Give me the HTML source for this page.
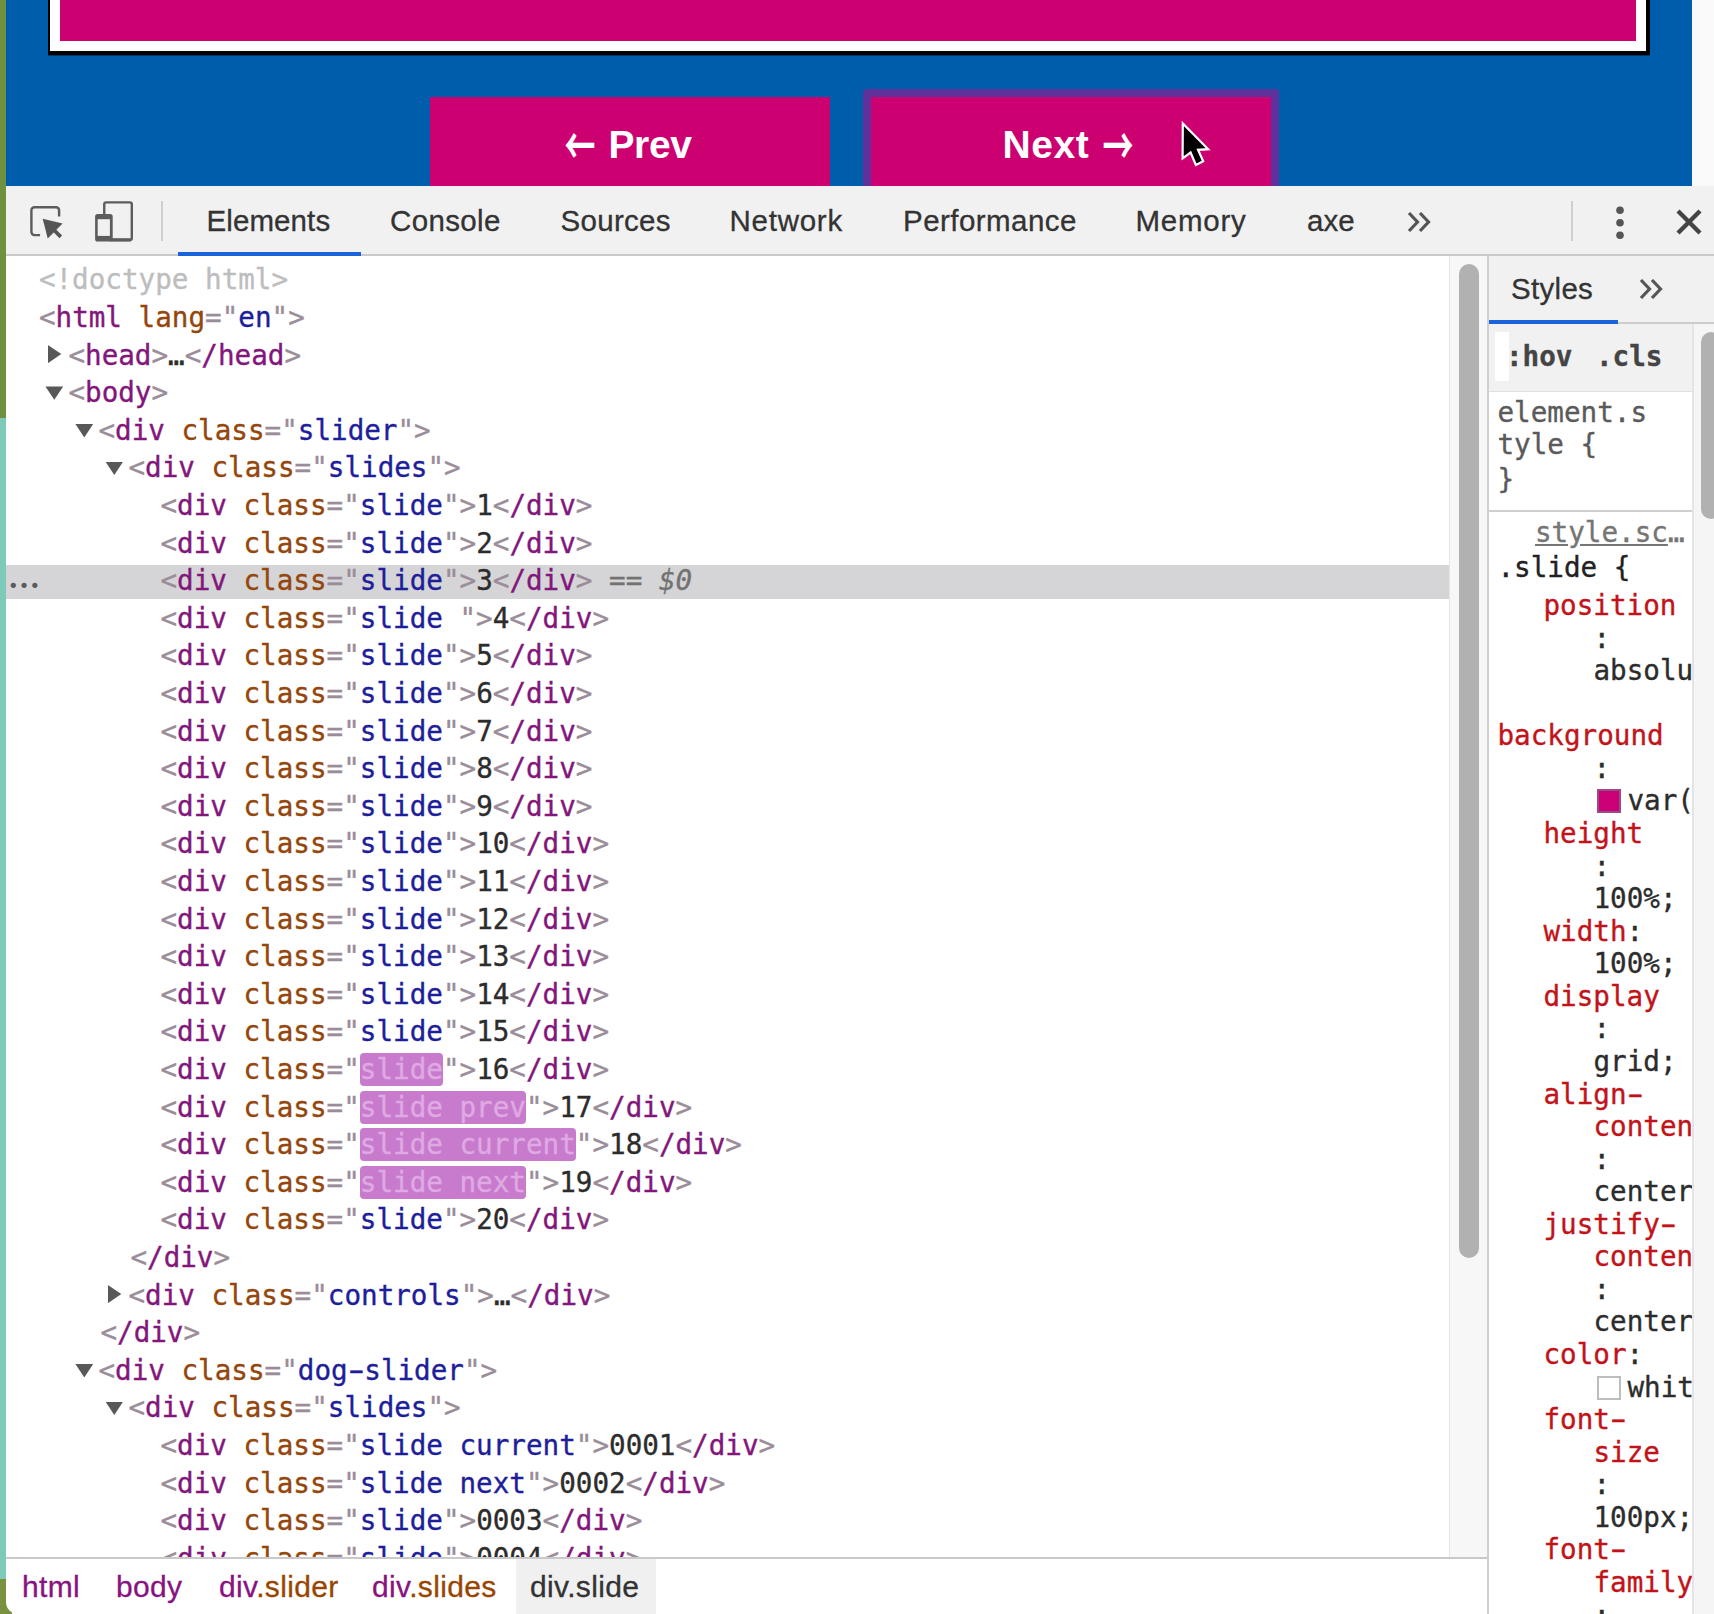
<!DOCTYPE html>
<html lang="en">
<head>
<meta charset="utf-8">
<title>Slider – DevTools</title>
<style>
*{box-sizing:border-box;margin:0;padding:0}
html,body{width:1714px;height:1614px;overflow:hidden;background:#fff}
body{position:relative;font-family:"Liberation Sans",sans-serif}
.abs{position:absolute}
/* left desktop strip */
#strip1{left:0;top:0;width:5.5px;height:418px;background:#6f903e}
#strip2{left:0;top:418px;width:5.5px;height:1162px;background:#7ecab9}
#strip3{left:0;top:1579px;width:12px;height:35px;background:#7a9140}
/* page */
#page{left:6px;top:0;width:1686px;height:186px;background:#005dac;overflow:hidden}
#pagescroll{left:1692px;top:0;width:22px;height:186px;background:#fafafa}
#slide{left:44px;top:-60px;width:1596px;height:111px;background:#cc0070;border:10px solid #fff;box-shadow:1px 1.4px 0 3px #000}
.btn{top:97px;height:120px;background:#cc0070;color:#fff;font-weight:bold;font-size:39px;line-height:40px;letter-spacing:-0.4px;white-space:nowrap}
#prev{left:423.5px;width:400px}
#next{left:864.5px;width:400px;box-shadow:0 0 0 7px #60319a,0 0 2px 8px #5a379f;border-radius:1px}
.btn span{position:absolute;top:28px}
.btn .ar{font-family:"Noto Sans CJK JP","DejaVu Sans",sans-serif;font-size:36px;top:24.5px;transform:scale(0.86,1.42);transform-origin:50% 50%;letter-spacing:0}
/* devtools toolbar */
#tb{left:6px;top:186px;width:1708px;height:70.4px;background:#f1f1f1;border-bottom:2px solid #cacaca}
.tab{position:absolute;top:0;height:70px;line-height:70px;font-size:29.5px;color:#333;white-space:nowrap;-webkit-text-stroke:0.3px}
#ul{left:178px;top:252px;width:183px;height:4px;background:#1a63d8}
.vdiv{width:2px;height:40px;top:201px;background:#cfcfcf}
/* elements */
#el{left:6px;top:256px;width:1481px;height:1302px;background:#fff;overflow:hidden}
#tree{position:absolute;left:-6px;top:-256px;width:1714px;height:1614px;font-family:"DejaVu Sans Mono","Liberation Mono",monospace;font-size:27.6px;line-height:37.6px;white-space:pre;-webkit-text-stroke:0.35px}
.row{position:absolute;height:37.6px;color:#222}
.p{color:#9a8c98}.t{color:#83167b}.a{color:#94460c}.v{color:#1e1e9a}.x{color:#2c2c2c}.dt{color:#bdbdbd}
.eq{color:#727272}
.hl{background:#c87bcc;color:#dfa9e3;border-radius:4px;padding:0}
.selrow{position:absolute;left:5.5px;width:1444.5px;height:34.5px;background:#d5d5d7}
.dots{position:absolute;left:8px;width:40px;height:37.6px;color:#5a5a5a;font-family:"Liberation Serif",serif;font-weight:bold;font-size:32px;line-height:37.6px;-webkit-text-stroke:0;margin-top:-3px}
.arr-r{position:absolute;width:13.8px;height:18.6px;background:#585858;clip-path:polygon(0 0,100% 50%,0 100%);margin:-10.6px 0 0 2.5px}
.arr-d{position:absolute;width:17.8px;height:13.4px;background:#585858;clip-path:polygon(0 0,100% 0,50% 100%);margin:-6.6px 0 0 0.4px}
#vsb{left:1449px;top:256px;width:38px;height:1302px;background:#f7f7f7;border-left:1px solid #e6e6e6}
#vth{left:1458.5px;top:264px;width:20px;height:994px;background:#b1b1b1;border-radius:10px}
/* breadcrumbs */
#bc{left:6px;top:1557px;width:1481px;height:57px;background:#fff;border-top:2px solid #c9c9c9;border-bottom-left-radius:12px}
.cr{position:absolute;top:0;height:55px;line-height:56.5px;font-size:30px;letter-spacing:0.35px;color:#881280;white-space:nowrap;-webkit-text-stroke:0.3px}
.cr b{font-weight:normal;color:#994500}
#crsel{left:510px;width:140px;height:55px;top:0;background:#f0f0f0}
/* styles */
#st{left:1487px;top:256px;width:227px;height:1358px;background:#fff;overflow:hidden;font-family:"DejaVu Sans Mono","Liberation Mono",monospace;font-size:27.6px;line-height:32.57px;white-space:pre;-webkit-text-stroke:0.35px}
#sthead{left:0;top:0;width:227px;height:68px;background:#f1f1f1;border-bottom:2px solid #cdcdcd}
#stul{left:0;top:63.5px;width:131px;height:4px;background:#1a63d8}
#sttb{left:0;top:68px;width:205px;height:68px;background:#f1f1f1;border-bottom:1px solid #e0e0e0}
#stsb{left:205px;top:68px;width:22px;height:1290px;background:#f5f5f5;border-left:2px solid #e4e4e4}
#stth{left:213.8px;top:75.5px;width:20px;height:187px;background:#b1b1b1;border-radius:10px}
#stsep{left:0;top:254px;width:205px;height:2px;background:#cfcfcf}
.sl{position:absolute;height:32.57px}
.pn{color:#c2131a}.pv{color:#2c2c2c}
.hy{display:inline-block;transform:scaleX(1.7)}
.sw{display:inline-block;width:24px;height:24px;border:2px solid;vertical-align:-3px;margin:0 7px 0 3px}
</style>
</head>
<body>
<div id="strip1" class="abs"></div><div id="strip2" class="abs"></div><div id="strip3" class="abs"></div>

<div id="page" class="abs">
  <div id="slide" class="abs"></div>
  <div id="prev" class="abs btn"><span class="ar" style="left:132.5px">←</span><span style="left:179px">Prev</span></div>
  <div id="next" class="abs btn"><span style="left:132px;letter-spacing:0.6px">Next</span><span class="ar" style="left:229px">→</span></div>
  <svg class="abs" style="left:1164px;top:110px" width="60" height="70" viewBox="1170 110 60 70"><path d="M1182.8 123.4 L1182.6 158.3 L1190.6 152.5 L1195.9 165 L1203.2 161.3 L1198 149.8 L1208.2 149.2 Z" fill="#000" stroke="#fff" stroke-width="2.2" stroke-linejoin="miter"/></svg>
</div>
<div id="pagescroll" class="abs"></div>

<div id="tb" class="abs">
  <svg class="abs" style="left:-6px;top:0" width="200" height="70" viewBox="0 186 200 70" fill="none">
    <path d="M40.1 235.1 H34.4 a3 3 0 0 1 -3 -3 V210.3 a3 3 0 0 1 3 -3 H56.1 a3 3 0 0 1 3 3 V216.5" stroke="#5c5c5c" stroke-width="2.4"/>
    <path d="M42.7 218.7 L62.6 223.4 L47.7 238.6 Z" fill="#555"/>
    <path d="M53 229 L60.8 236.8" stroke="#555" stroke-width="3.8"/>
    <path d="M104.25 214.5 V204.4 a2 2 0 0 1 2 -2 H129.8 a2 2 0 0 1 2 2 V238 a2 2 0 0 1 -2 2 H112" stroke="#5c5c5c" stroke-width="2.4"/>
    <rect x="110" y="238.2" width="21" height="3.4" rx="1.2" fill="#5c5c5c"/>
    <rect x="95.1" y="214.1" width="17.6" height="27.5" rx="2.6" fill="#5c5c5c"/>
    <rect x="97.7" y="219.2" width="12.2" height="16.7" fill="#f1f1f1"/>
  </svg>
  <span class="tab" style="left:200.5px;letter-spacing:0.1px">Elements</span>
  <span class="tab" style="left:384px;letter-spacing:0.35px">Console</span>
  <span class="tab" style="left:554.5px;letter-spacing:0.3px">Sources</span>
  <span class="tab" style="left:723.5px;letter-spacing:0.75px">Network</span>
  <span class="tab" style="left:897px;letter-spacing:0.45px">Performance</span>
  <span class="tab" style="left:1129.5px;letter-spacing:0.75px">Memory</span>
  <span class="tab" style="left:1301px">axe</span>
  <svg class="abs" style="left:1400px;top:25px" width="28" height="22" viewBox="0 0 28 22" fill="none" stroke="#555" stroke-width="3.2"><path d="M3 2 L11.5 11 L3 20"/><path d="M14 2 L22.5 11 L14 20"/></svg>
  <svg class="abs" style="left:1606px;top:18px" width="16" height="38" viewBox="0 0 16 38" fill="#555"><circle cx="8" cy="6.3" r="3.8"/><circle cx="8" cy="18.7" r="3.8"/><circle cx="8" cy="31.3" r="3.8"/></svg>
  <svg class="abs" style="left:1669px;top:22px" width="28" height="28" viewBox="0 0 28 28" fill="none" stroke="#444" stroke-width="4.4"><path d="M3 3 L25 25 M25 3 L3 25"/></svg>
</div>
<div class="abs vdiv" style="left:161px"></div>
<div class="abs vdiv" style="left:1571px"></div>
<div id="ul" class="abs"></div>

<div id="el" class="abs"><div id="tree">
<div class="row" style="left:38.9px;top:261.4px"><span class="dt">&lt;!doctype html&gt;</span></div>
<div class="row" style="left:38.9px;top:299.0px"><span class="p">&lt;</span><span class="t">html</span> <span class="a">lang</span><span class="p">="</span><span class="v">en</span><span class="p">"</span><span class="p">&gt;</span></div>
<div class="arr-r" style="left:45.0px;top:355.4px"></div>
<div class="row" style="left:68.4px;top:336.6px"><span class="p">&lt;</span><span class="t">head</span><span class="p">&gt;</span><span class="x">…</span><span class="p">&lt;</span><span class="t">/head</span><span class="p">&gt;</span></div>
<div class="arr-d" style="left:45.0px;top:393.0px"></div>
<div class="row" style="left:68.4px;top:374.2px"><span class="p">&lt;</span><span class="t">body</span><span class="p">&gt;</span></div>
<div class="arr-d" style="left:75.0px;top:430.6px"></div>
<div class="row" style="left:98.4px;top:411.8px"><span class="p">&lt;</span><span class="t">div</span> <span class="a">class</span><span class="p">="</span><span class="v">slider</span><span class="p">"</span><span class="p">&gt;</span></div>
<div class="arr-d" style="left:105.0px;top:468.2px"></div>
<div class="row" style="left:128.4px;top:449.4px"><span class="p">&lt;</span><span class="t">div</span> <span class="a">class</span><span class="p">="</span><span class="v">slides</span><span class="p">"</span><span class="p">&gt;</span></div>
<div class="row" style="left:160.4px;top:487.0px"><span class="p">&lt;</span><span class="t">div</span> <span class="a">class</span><span class="p">="</span><span class="v">slide</span><span class="p">"</span><span class="p">&gt;</span><span class="x">1</span><span class="p">&lt;</span><span class="t">/div</span><span class="p">&gt;</span></div>
<div class="row" style="left:160.4px;top:524.6px"><span class="p">&lt;</span><span class="t">div</span> <span class="a">class</span><span class="p">="</span><span class="v">slide</span><span class="p">"</span><span class="p">&gt;</span><span class="x">2</span><span class="p">&lt;</span><span class="t">/div</span><span class="p">&gt;</span></div>
<div class="selrow" style="top:564.8px"></div>
<div class="dots" style="top:562.2px">…</div>
<div class="row" style="left:160.4px;top:562.2px"><span class="p">&lt;</span><span class="t">div</span> <span class="a">class</span><span class="p">="</span><span class="v">slide</span><span class="p">"</span><span class="p">&gt;</span><span class="x">3</span><span class="p">&lt;</span><span class="t">/div</span><span class="p">&gt;</span><span class="eq"> == <i>$0</i></span></div>
<div class="row" style="left:160.4px;top:599.8px"><span class="p">&lt;</span><span class="t">div</span> <span class="a">class</span><span class="p">="</span><span class="v">slide </span><span class="p">"</span><span class="p">&gt;</span><span class="x">4</span><span class="p">&lt;</span><span class="t">/div</span><span class="p">&gt;</span></div>
<div class="row" style="left:160.4px;top:637.4px"><span class="p">&lt;</span><span class="t">div</span> <span class="a">class</span><span class="p">="</span><span class="v">slide</span><span class="p">"</span><span class="p">&gt;</span><span class="x">5</span><span class="p">&lt;</span><span class="t">/div</span><span class="p">&gt;</span></div>
<div class="row" style="left:160.4px;top:675.0px"><span class="p">&lt;</span><span class="t">div</span> <span class="a">class</span><span class="p">="</span><span class="v">slide</span><span class="p">"</span><span class="p">&gt;</span><span class="x">6</span><span class="p">&lt;</span><span class="t">/div</span><span class="p">&gt;</span></div>
<div class="row" style="left:160.4px;top:712.6px"><span class="p">&lt;</span><span class="t">div</span> <span class="a">class</span><span class="p">="</span><span class="v">slide</span><span class="p">"</span><span class="p">&gt;</span><span class="x">7</span><span class="p">&lt;</span><span class="t">/div</span><span class="p">&gt;</span></div>
<div class="row" style="left:160.4px;top:750.2px"><span class="p">&lt;</span><span class="t">div</span> <span class="a">class</span><span class="p">="</span><span class="v">slide</span><span class="p">"</span><span class="p">&gt;</span><span class="x">8</span><span class="p">&lt;</span><span class="t">/div</span><span class="p">&gt;</span></div>
<div class="row" style="left:160.4px;top:787.8px"><span class="p">&lt;</span><span class="t">div</span> <span class="a">class</span><span class="p">="</span><span class="v">slide</span><span class="p">"</span><span class="p">&gt;</span><span class="x">9</span><span class="p">&lt;</span><span class="t">/div</span><span class="p">&gt;</span></div>
<div class="row" style="left:160.4px;top:825.4px"><span class="p">&lt;</span><span class="t">div</span> <span class="a">class</span><span class="p">="</span><span class="v">slide</span><span class="p">"</span><span class="p">&gt;</span><span class="x">10</span><span class="p">&lt;</span><span class="t">/div</span><span class="p">&gt;</span></div>
<div class="row" style="left:160.4px;top:863.0px"><span class="p">&lt;</span><span class="t">div</span> <span class="a">class</span><span class="p">="</span><span class="v">slide</span><span class="p">"</span><span class="p">&gt;</span><span class="x">11</span><span class="p">&lt;</span><span class="t">/div</span><span class="p">&gt;</span></div>
<div class="row" style="left:160.4px;top:900.6px"><span class="p">&lt;</span><span class="t">div</span> <span class="a">class</span><span class="p">="</span><span class="v">slide</span><span class="p">"</span><span class="p">&gt;</span><span class="x">12</span><span class="p">&lt;</span><span class="t">/div</span><span class="p">&gt;</span></div>
<div class="row" style="left:160.4px;top:938.2px"><span class="p">&lt;</span><span class="t">div</span> <span class="a">class</span><span class="p">="</span><span class="v">slide</span><span class="p">"</span><span class="p">&gt;</span><span class="x">13</span><span class="p">&lt;</span><span class="t">/div</span><span class="p">&gt;</span></div>
<div class="row" style="left:160.4px;top:975.8px"><span class="p">&lt;</span><span class="t">div</span> <span class="a">class</span><span class="p">="</span><span class="v">slide</span><span class="p">"</span><span class="p">&gt;</span><span class="x">14</span><span class="p">&lt;</span><span class="t">/div</span><span class="p">&gt;</span></div>
<div class="row" style="left:160.4px;top:1013.4px"><span class="p">&lt;</span><span class="t">div</span> <span class="a">class</span><span class="p">="</span><span class="v">slide</span><span class="p">"</span><span class="p">&gt;</span><span class="x">15</span><span class="p">&lt;</span><span class="t">/div</span><span class="p">&gt;</span></div>
<div class="row" style="left:160.4px;top:1051.0px"><span class="p">&lt;</span><span class="t">div</span> <span class="a">class</span><span class="p">="</span><span class="v hl">slide</span><span class="p">"</span><span class="p">&gt;</span><span class="x">16</span><span class="p">&lt;</span><span class="t">/div</span><span class="p">&gt;</span></div>
<div class="row" style="left:160.4px;top:1088.6px"><span class="p">&lt;</span><span class="t">div</span> <span class="a">class</span><span class="p">="</span><span class="v hl">slide prev</span><span class="p">"</span><span class="p">&gt;</span><span class="x">17</span><span class="p">&lt;</span><span class="t">/div</span><span class="p">&gt;</span></div>
<div class="row" style="left:160.4px;top:1126.2px"><span class="p">&lt;</span><span class="t">div</span> <span class="a">class</span><span class="p">="</span><span class="v hl">slide current</span><span class="p">"</span><span class="p">&gt;</span><span class="x">18</span><span class="p">&lt;</span><span class="t">/div</span><span class="p">&gt;</span></div>
<div class="row" style="left:160.4px;top:1163.8px"><span class="p">&lt;</span><span class="t">div</span> <span class="a">class</span><span class="p">="</span><span class="v hl">slide next</span><span class="p">"</span><span class="p">&gt;</span><span class="x">19</span><span class="p">&lt;</span><span class="t">/div</span><span class="p">&gt;</span></div>
<div class="row" style="left:160.4px;top:1201.4px"><span class="p">&lt;</span><span class="t">div</span> <span class="a">class</span><span class="p">="</span><span class="v">slide</span><span class="p">"</span><span class="p">&gt;</span><span class="x">20</span><span class="p">&lt;</span><span class="t">/div</span><span class="p">&gt;</span></div>
<div class="row" style="left:130.4px;top:1239.0px"><span class="p">&lt;</span><span class="t">/div</span><span class="p">&gt;</span></div>
<div class="arr-r" style="left:105.0px;top:1295.4px"></div>
<div class="row" style="left:128.4px;top:1276.6px"><span class="p">&lt;</span><span class="t">div</span> <span class="a">class</span><span class="p">="</span><span class="v">controls</span><span class="p">"</span><span class="p">&gt;</span><span class="x">…</span><span class="p">&lt;</span><span class="t">/div</span><span class="p">&gt;</span></div>
<div class="row" style="left:100.4px;top:1314.2px"><span class="p">&lt;</span><span class="t">/div</span><span class="p">&gt;</span></div>
<div class="arr-d" style="left:75.0px;top:1370.6px"></div>
<div class="row" style="left:98.4px;top:1351.8px"><span class="p">&lt;</span><span class="t">div</span> <span class="a">class</span><span class="p">="</span><span class="v">dog<span class="hy">-</span>slider</span><span class="p">"</span><span class="p">&gt;</span></div>
<div class="arr-d" style="left:105.0px;top:1408.2px"></div>
<div class="row" style="left:128.4px;top:1389.4px"><span class="p">&lt;</span><span class="t">div</span> <span class="a">class</span><span class="p">="</span><span class="v">slides</span><span class="p">"</span><span class="p">&gt;</span></div>
<div class="row" style="left:160.4px;top:1427.0px"><span class="p">&lt;</span><span class="t">div</span> <span class="a">class</span><span class="p">="</span><span class="v">slide current</span><span class="p">"</span><span class="p">&gt;</span><span class="x">0001</span><span class="p">&lt;</span><span class="t">/div</span><span class="p">&gt;</span></div>
<div class="row" style="left:160.4px;top:1464.6px"><span class="p">&lt;</span><span class="t">div</span> <span class="a">class</span><span class="p">="</span><span class="v">slide next</span><span class="p">"</span><span class="p">&gt;</span><span class="x">0002</span><span class="p">&lt;</span><span class="t">/div</span><span class="p">&gt;</span></div>
<div class="row" style="left:160.4px;top:1502.2px"><span class="p">&lt;</span><span class="t">div</span> <span class="a">class</span><span class="p">="</span><span class="v">slide</span><span class="p">"</span><span class="p">&gt;</span><span class="x">0003</span><span class="p">&lt;</span><span class="t">/div</span><span class="p">&gt;</span></div>
<div class="row" style="left:160.4px;top:1539.8px"><span class="p">&lt;</span><span class="t">div</span> <span class="a">class</span><span class="p">="</span><span class="v">slide</span><span class="p">"</span><span class="p">&gt;</span><span class="x">0004</span><span class="p">&lt;</span><span class="t">/div</span><span class="p">&gt;</span></div>
</div></div>
<div id="vsb" class="abs"></div>
<div id="vth" class="abs"></div>

<div id="bc" class="abs">
  <div id="crsel" class="abs"></div>
  <span class="cr" style="left:16px">html</span>
  <span class="cr" style="left:110px">body</span>
  <span class="cr" style="left:213px">div<b>.slider</b></span>
  <span class="cr" style="left:366px">div<b>.slides</b></span>
  <span class="cr" style="left:524px;color:#333">div.slide</span>
</div>

<div id="st" class="abs">
  <div id="sthead" class="abs"></div>
  <span class="abs" style="left:24px;top:0;height:65px;line-height:66px;font-family:'Liberation Sans',sans-serif;font-size:29.5px;color:#333;letter-spacing:0.3px;-webkit-text-stroke:0.3px">Styles</span>
  <svg class="abs" style="left:151px;top:22px" width="28" height="22" viewBox="0 0 28 22" fill="none" stroke="#555" stroke-width="3.2"><path d="M3 2 L11.5 11 L3 20"/><path d="M14 2 L22.5 11 L14 20"/></svg>
  <div id="stul" class="abs"></div>
  <div id="sttb" class="abs"></div>
  <div class="abs" style="left:8px;top:76px;width:14px;height:49px;background:#fff"></div>
  <span class="abs" style="left:19px;top:67px;height:68px;line-height:68px;font-weight:bold;color:#444">:hov</span>
  <span class="abs" style="left:109px;top:67px;height:68px;line-height:68px;font-weight:bold;color:#444">.cls</span>
  <div class="sl" style="left:10.5px;top:140.7px;color:#5a5a5a">element.s</div>
  <div class="sl" style="left:10.5px;top:173.3px;color:#5a5a5a">tyle {</div>
  <div class="sl" style="left:10.5px;top:208.4px;color:#5a5a5a">}</div>
  <div id="stsep" class="abs"></div>
  <div class="sl" style="left:48px;top:260.5px;color:#757575"><span style="text-decoration:underline">style.sc</span>…</div>
  <div class="sl" style="left:10.5px;top:295.5px;color:#222">.slide {</div>
<div class="sl" style="left:56.5px;top:333.9px"><span class="pn">position</span></div>
<div class="sl" style="left:106.5px;top:366.5px"><span class="pv">:</span></div>
<div class="sl" style="left:106.5px;top:399.0px"><span class="pv">absolute;</span></div>
<div class="sl" style="left:10.5px;top:464.2px"><span class="pn">background</span></div>
<div class="sl" style="left:106.5px;top:496.8px"><span class="pv">:</span></div>
<div class="sl" style="left:106.5px;top:529.3px"><span class="sw" style="background:#cc0077;border-color:#9a4a86"></span><span class="pv">var(<span class="hy">-</span><span class="hy">-</span>pink);</span></div>
<div class="sl" style="left:56.5px;top:561.9px"><span class="pn">height</span></div>
<div class="sl" style="left:106.5px;top:594.5px"><span class="pv">:</span></div>
<div class="sl" style="left:106.5px;top:627.0px"><span class="pv">100%;</span></div>
<div class="sl" style="left:56.5px;top:659.6px"><span class="pn">width</span><span class="pv">:</span></div>
<div class="sl" style="left:106.5px;top:692.2px"><span class="pv">100%;</span></div>
<div class="sl" style="left:56.5px;top:724.7px"><span class="pn">display</span></div>
<div class="sl" style="left:106.5px;top:757.3px"><span class="pv">:</span></div>
<div class="sl" style="left:106.5px;top:789.9px"><span class="pv">grid;</span></div>
<div class="sl" style="left:56.5px;top:822.5px"><span class="pn">align<span class="hy">-</span></span></div>
<div class="sl" style="left:106.5px;top:855.0px"><span class="pn">content</span></div>
<div class="sl" style="left:106.5px;top:887.6px"><span class="pv">:</span></div>
<div class="sl" style="left:106.5px;top:920.2px"><span class="pv">center;</span></div>
<div class="sl" style="left:56.5px;top:952.7px"><span class="pn">justify<span class="hy">-</span></span></div>
<div class="sl" style="left:106.5px;top:985.3px"><span class="pn">content</span></div>
<div class="sl" style="left:106.5px;top:1017.9px"><span class="pv">:</span></div>
<div class="sl" style="left:106.5px;top:1050.4px"><span class="pv">center;</span></div>
<div class="sl" style="left:56.5px;top:1083.0px"><span class="pn">color</span><span class="pv">:</span></div>
<div class="sl" style="left:106.5px;top:1115.6px"><span class="sw" style="background:#fff;border-color:#bdbdbd"></span><span class="pv">white;</span></div>
<div class="sl" style="left:56.5px;top:1148.2px"><span class="pn">font<span class="hy">-</span></span></div>
<div class="sl" style="left:106.5px;top:1180.7px"><span class="pn">size</span></div>
<div class="sl" style="left:106.5px;top:1213.3px"><span class="pv">:</span></div>
<div class="sl" style="left:106.5px;top:1245.9px"><span class="pv">100px;</span></div>
<div class="sl" style="left:56.5px;top:1278.4px"><span class="pn">font<span class="hy">-</span></span></div>
<div class="sl" style="left:106.5px;top:1311.0px"><span class="pn">family</span></div>
<div class="sl" style="left:106.5px;top:1343.6px"><span class="pv">:</span></div>
  <div id="stsb" class="abs"></div>
  <div class="abs" style="left:0;top:0;width:2px;height:1358px;background:#cfcfcf"></div>
  <div id="stth" class="abs"></div>
</div>
</body>
</html>
